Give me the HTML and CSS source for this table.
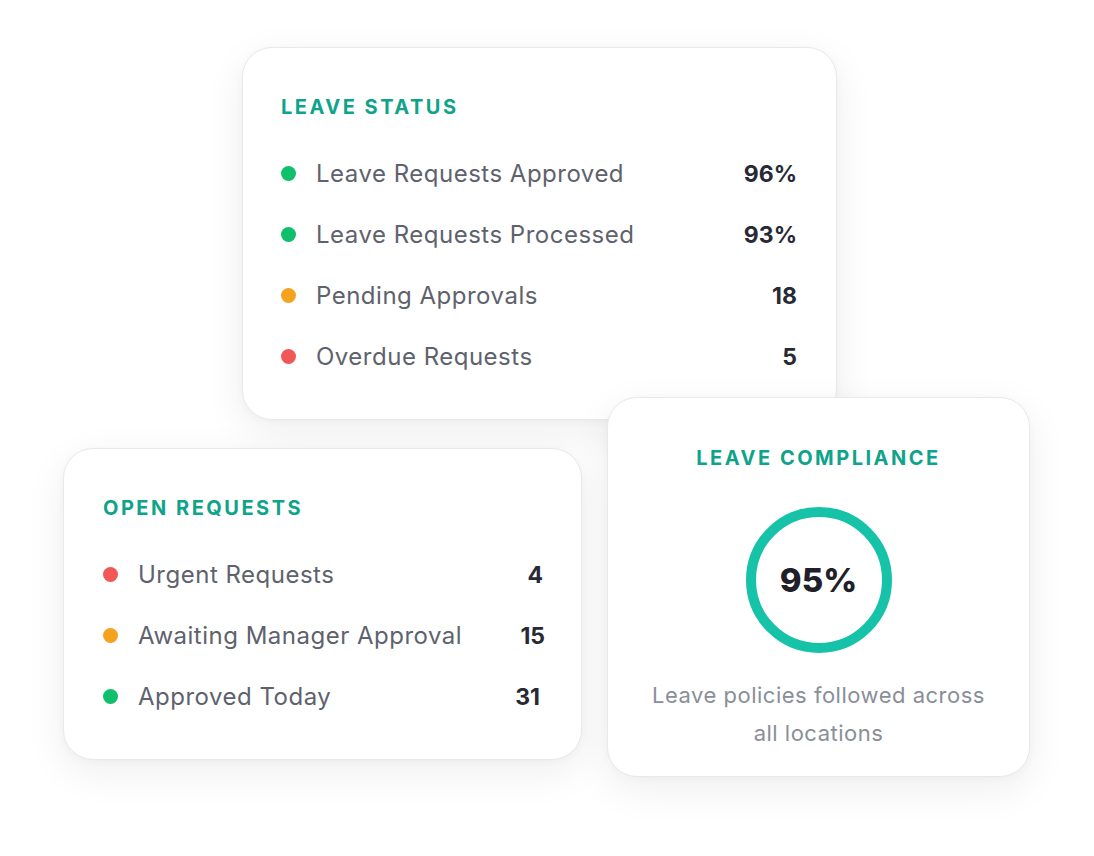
FILE: index.html
```html
<!DOCTYPE html>
<html lang="en">
<head>
<meta charset="utf-8">
<title>Leave Dashboard</title>
<link rel="stylesheet" href="styles.css">
</head>
<body>
<div class="canvas">
  <section class="card card-status">
    <h2 class="card-title">LEAVE STATUS</h2>
    <ul class="stat-list">
      <li class="stat-row"><span class="dot dot-green"></span><span class="stat-label">Leave Requests Approved</span><span class="stat-value">96%</span></li>
      <li class="stat-row"><span class="dot dot-green"></span><span class="stat-label">Leave Requests Processed</span><span class="stat-value">93%</span></li>
      <li class="stat-row"><span class="dot dot-orange"></span><span class="stat-label">Pending Approvals</span><span class="stat-value">18</span></li>
      <li class="stat-row"><span class="dot dot-red"></span><span class="stat-label">Overdue Requests</span><span class="stat-value">5</span></li>
    </ul>
  </section>

  <section class="card card-open">
    <h2 class="card-title">OPEN REQUESTS</h2>
    <ul class="stat-list">
      <li class="stat-row"><span class="dot dot-red"></span><span class="stat-label">Urgent Requests</span><span class="stat-value">4</span></li>
      <li class="stat-row"><span class="dot dot-orange"></span><span class="stat-label">Awaiting Manager Approval</span><span class="stat-value v-15">15</span></li>
      <li class="stat-row"><span class="dot dot-green"></span><span class="stat-label">Approved Today</span><span class="stat-value v-31">31</span></li>
    </ul>
  </section>

  <section class="card card-compliance">
    <h2 class="card-title">LEAVE COMPLIANCE</h2>
    <div class="ring">
      <svg class="ring-svg" width="146" height="146" viewBox="0 0 146 146" aria-hidden="true">
        <circle cx="73" cy="73" r="68" fill="none" stroke="#16c2a8" stroke-width="10"/>
      </svg>
      <span class="ring-value">95%</span>
    </div>
    <p class="caption">Leave policies followed across<br>all locations</p>
  </section>
</div>
</body>
</html>
```

FILE: styles.css
```css
* { box-sizing: border-box; }

html, body {
  margin: 0;
  padding: 0;
  background: #ffffff;
}

body {
  font-family: "Inter", "Noto Sans", "Liberation Sans", sans-serif;
  color: #5c606b;
}

.canvas {
  position: relative;
  width: 1094px;
  height: 856px;
  overflow: hidden;
}

.card {
  position: absolute;
  background: #ffffff;
  border: 1px solid #e9e9e9;
  border-radius: 30px;
  box-shadow: 0 12px 40px rgba(30, 30, 40, 0.07), 0 2px 8px rgba(30, 30, 40, 0.03);
}

.card-status {
  left: 242px;
  top: 47px;
  width: 595px;
  height: 373px;
  padding: 47px 39px 0 38px;
  z-index: 1;
}

.card-open {
  left: 63px;
  top: 448px;
  width: 519px;
  height: 312px;
  padding: 47px 38px 0 39px;
  z-index: 1;
}

.card-compliance {
  left: 607px;
  top: 397px;
  width: 423px;
  height: 380px;
  padding: 48px 20px 0;
  z-index: 2;
  display: flex;
  flex-direction: column;
  align-items: center;
}

.card-title {
  margin: 0 0 24px;
  height: 24px;
  line-height: 24px;
  font-size: 20px;
  font-weight: 700;
  letter-spacing: 2.5px;
  color: #0fa38b;
}

.stat-list {
  list-style: none;
  margin: 0;
  padding: 0;
}

.stat-row {
  display: flex;
  align-items: center;
  height: 61px;
}

.dot {
  flex: 0 0 auto;
  width: 15px;
  height: 15px;
  border-radius: 50%;
  margin-right: 20px;
}

.dot-green { background: #10bf6c; }
.dot-orange { background: #f5a21f; }
.dot-red { background: #f25757; }

.stat-label {
  flex: 1 1 auto;
  font-size: 24px;
  font-weight: 400;
  letter-spacing: 0.5px;
  color: #5e626d;
  white-space: nowrap;
}

.stat-value {
  flex: 0 0 auto;
  font-size: 23px;
  font-weight: 700;
  color: #272a35;
  text-align: right;
}

.v-15 { margin-right: -2px; }
.v-31 { margin-right: 3px; }

.card-compliance .card-title {
  margin-bottom: 37px;
}

.ring {
  position: relative;
  width: 146px;
  height: 146px;
  display: flex;
  align-items: center;
  justify-content: center;
}

.ring-svg {
  position: absolute;
  left: 0;
  top: 0;
}

.ring-value {
  position: relative;
  font-size: 33px;
  font-weight: 800;
  color: #1f2029;
}

.caption {
  margin: 23px 0 0;
  text-align: center;
  font-size: 22px;
  letter-spacing: 0.5px;
  line-height: 38px;
  color: #8a8e97;
}
```
